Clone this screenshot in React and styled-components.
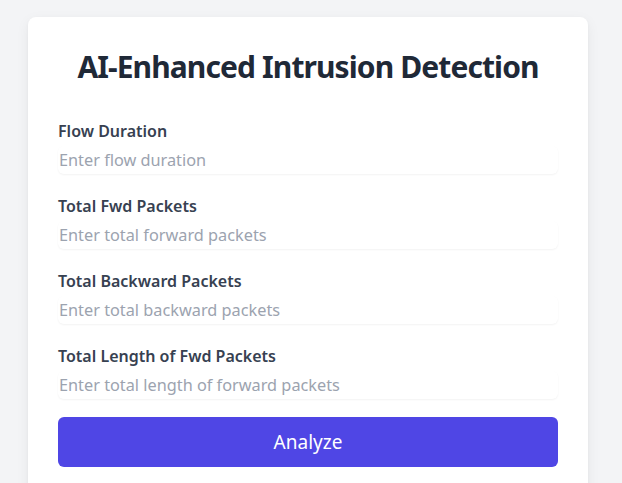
import React from 'react';
import styled, { createGlobalStyle } from 'styled-components';

const GlobalStyle = createGlobalStyle`
  html, body {
    margin: 0;
    padding: 0;
    background: #f3f4f6;
    font-family: 'Noto Sans', 'Open Sans', sans-serif;
    overflow: hidden;
  }
`;

const Page = styled.div`
  min-height: 483px;
  padding: 17px 34px 0 28px;
  box-sizing: border-box;
`;

const Card = styled.form`
  width: 560px;
  box-sizing: border-box;
  background: #fff;
  border-radius: 8px;
  box-shadow: 0 4px 14px rgba(0, 0, 0, 0.06), 0 1px 3px rgba(0, 0, 0, 0.04);
  padding: 30px 30px 40px;
`;

const Title = styled.h1`
  margin: 0 0 32px;
  font-size: 30px;
  line-height: 40px;
  font-weight: 700;
  letter-spacing: -0.9px;
  white-space: nowrap;
  color: #1f2937;
  text-align: center;
`;

const Fields = styled.div`
  display: flex;
  flex-direction: column;
  gap: 20px;
`;

const Field = styled.div`
  display: flex;
  flex-direction: column;
  gap: 3px;
`;

const Label = styled.label`
  font-size: 16px;
  line-height: 24px;
  font-weight: 600;
  color: #374151;
`;

const Input = styled.input`
  width: 100%;
  box-sizing: border-box;
  height: 28px;
  padding: 0 1px;
  border: none;
  border-radius: 6px;
  background: #fff;
  box-shadow: 0 1px 2px rgba(0, 0, 0, 0.05);
  font-family: inherit;
  font-size: 16.3px;
  color: #111827;
  outline: none;
  &::placeholder {
    color: #9ca3af;
  }
`;

const Button = styled.button`
  margin-top: 18px;
  width: 100%;
  height: 50px;
  border: none;
  border-radius: 6px;
  background: #4f46e5;
  color: #fff;
  font-family: inherit;
  font-size: 19px;
  cursor: pointer;
`;

const fields = [
  { label: 'Flow Duration', placeholder: 'Enter flow duration' },
  { label: 'Total Fwd Packets', placeholder: 'Enter total forward packets' },
  { label: 'Total Backward Packets', placeholder: 'Enter total backward packets' },
  { label: 'Total Length of Fwd Packets', placeholder: 'Enter total length of forward packets' },
];

export default function App() {
  return (
    <>
      <GlobalStyle />
      <Page>
        <Card onSubmit={(e) => e.preventDefault()}>
          <Title>AI-Enhanced Intrusion Detection</Title>
          <Fields>
            {fields.map((f) => (
              <Field key={f.label}>
                <Label>{f.label}</Label>
                <Input type="number" placeholder={f.placeholder} />
              </Field>
            ))}
          </Fields>
          <Button type="submit">Analyze</Button>
        </Card>
      </Page>
    </>
  );
}
